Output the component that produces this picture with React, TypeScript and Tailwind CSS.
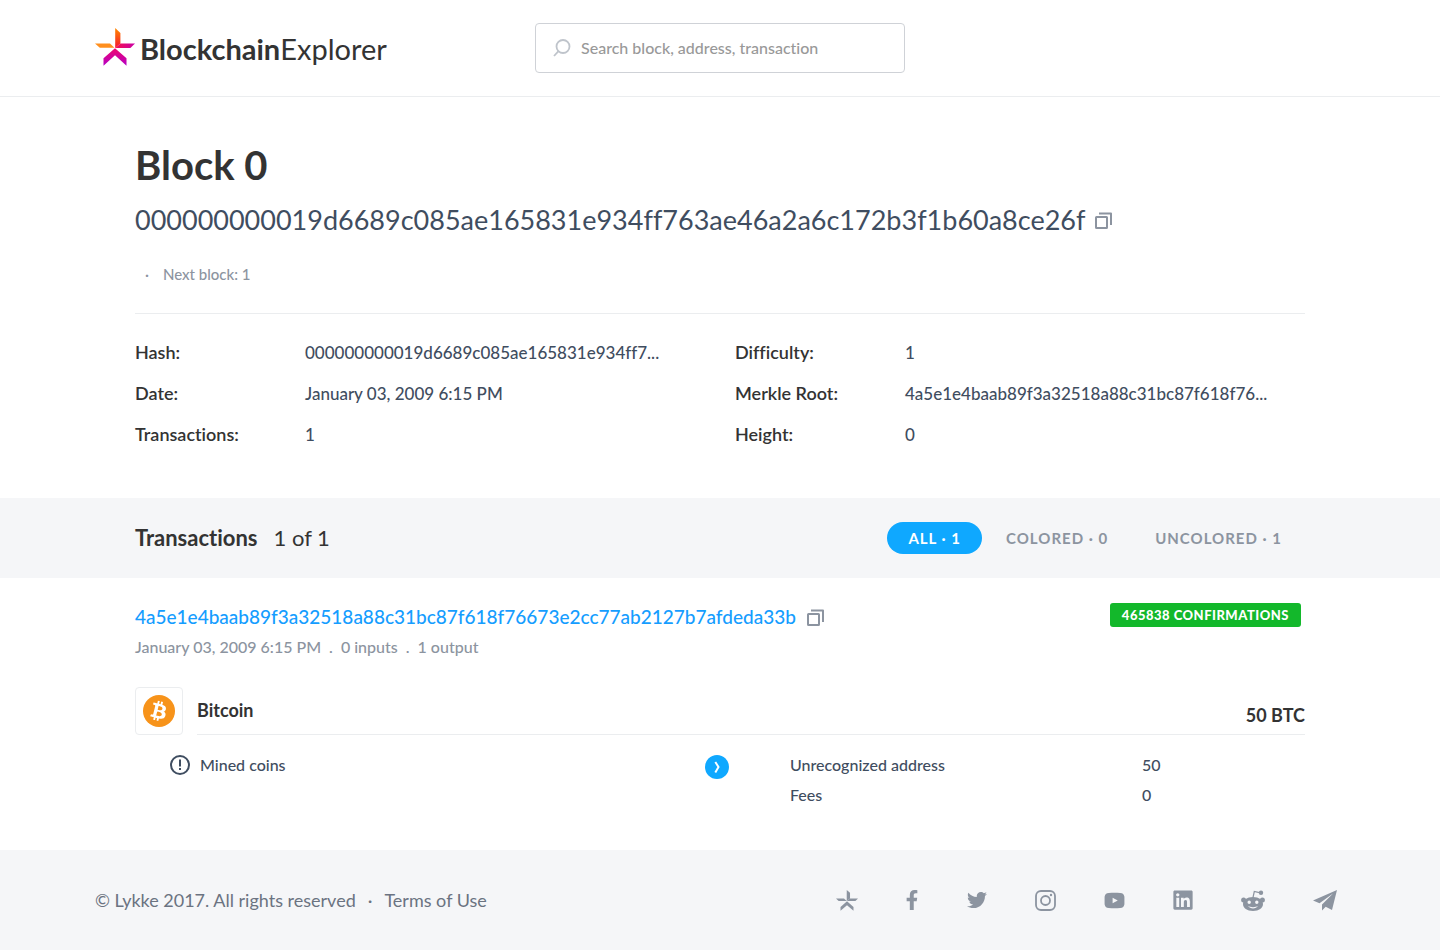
import { FaFacebookF, FaTwitter, FaLinkedin, FaBtc } from "react-icons/fa";

const GRAY = "text-[#8c94a0]";

function CopyIcon() {
  return (
    <svg viewBox="0 0 17 17" className="size-[17px]" fill="none" stroke="#8c94a0" strokeWidth="2" strokeLinejoin="round">
      <rect x="1" y="5" width="11" height="11" rx="0.5" />
      <path d="M4 1.500h12V13" />
    </svg>
  );
}

function StarShape() {
  return (
    <>
      <path d="M19.500 0l6 5v10.200l-6 4.800z" />
      <path d="M20 20l5-4.800H40L35.200 20z" />
      <path d="M0 15.200h14.500l5 4.800H4.800z" />
      <path d="M20 20.300l11.800 10.500v7L20 27.500 8.200 37.800v-7z" />
    </>
  );
}

function Logo() {
  return (
    <svg viewBox="0 0 40 38" className="h-[38px] w-10" aria-hidden="true">
      <defs>
        <linearGradient id="up" x1="0" y1="0" x2="0" y2="1">
          <stop offset="0" stopColor="#ff8a00" />
          <stop offset="1" stopColor="#f5142e" />
        </linearGradient>
        <linearGradient id="right" x1="0" y1="0" x2="1" y2="0">
          <stop offset="0" stopColor="#f8104a" />
          <stop offset="1" stopColor="#c800a8" />
        </linearGradient>
        <linearGradient id="legs" x1="0" y1="0" x2="0" y2="1">
          <stop offset="0" stopColor="#f0056c" />
          <stop offset="1" stopColor="#b400c8" />
        </linearGradient>
      </defs>
      <path fill="#ff8f1e" d="M0 15.500h15l4.500 4.300H4.800z" />
      <path fill="url(#up)" d="M20.200 0l5.200 5v10.500L20.200 20z" />
      <path fill="url(#right)" d="M20.200 20l5.200-4.600H40L35.400 20z" />
      <path fill="url(#legs)" d="M20 20.300l11.500 10v7.500L20 27.300 8.500 37.800v-7.500z" />
    </svg>
  );
}

const left = [
  ["Hash:", "000000000019d6689c085ae165831e934ff7..."],
  ["Date:", "January 03, 2009 6:15 PM"],
  ["Transactions:", "1"],
];
const right = [
  ["Difficulty:", "1"],
  ["Merkle Root:", "4a5e1e4baab89f3a32518a88c31bc87f618f76..."],
  ["Height:", "0"],
];

function Details({ rows }: { rows: string[][] }) {
  return (
    <dl className="flex flex-1 flex-col gap-[17px] text-[17px] leading-6">
      {rows.map(([k, v]) => (
        <div key={k} className="flex h-6 items-baseline">
          <dt className="w-[170px] shrink-0 text-lg leading-6 font-semibold text-[#333]">{k}</dt>
          <dd className="font-medium whitespace-nowrap text-[#3f4d60]">{v}</dd>
        </div>
      ))}
    </dl>
  );
}

function Socials() {
  return (
    <nav className={`mr-2 flex items-center ${GRAY}`}>
      <a href="#lykke" aria-label="Lykke" className="flex w-[22px] justify-center">
        <svg viewBox="0 0 40 38" className="h-[21px] w-[22px]" fill="currentColor"><StarShape /></svg>
      </a>
      <a href="#facebook" aria-label="Facebook" className="ml-11 flex w-5 justify-center"><FaFacebookF className="size-5" /></a>
      <a href="#twitter" aria-label="Twitter" className="ml-[45px] flex"><FaTwitter className="size-5" /></a>
      <a href="#instagram" aria-label="Instagram" className="ml-12 flex">
        <svg viewBox="0 0 21 21" className="size-[21px]" fill="none" stroke="currentColor" strokeWidth="1.800">
          <rect x="1" y="1" width="19" height="19" rx="5" />
          <circle cx="10.500" cy="10.500" r="4.500" />
          <circle cx="16" cy="5" r="1.200" fill="currentColor" stroke="none" />
        </svg>
      </a>
      <a href="#youtube" aria-label="YouTube" className="ml-12 flex">
        <svg viewBox="0 0 22 18" className="h-[17px] w-[21px]" fill="currentColor" fillRule="evenodd">
          <path d="M5 1C9 .7 13 .7 17 1c3 .2 4 1.500 4.500 4v8c-.5 2.500-1.500 3.800-4.500 4-4 .3-8 .3-12 0-3-.2-4-1.500-4.500-4V5C1 2.500 2 1.200 5 1zm4 5v6l5.500-3z" />
        </svg>
      </a>
      <a href="#linkedin" aria-label="LinkedIn" className="ml-[47px] flex"><FaLinkedin className="size-[22px]" /></a>
      <a href="#reddit" aria-label="Reddit" className="ml-[47px] flex">
        <svg viewBox="0 0 24 21" className="h-[21px] w-6" fill="currentColor" fillRule="evenodd">
          <path d="M12 7c6 0 10 3 10 7s-4 7-10 7-10-3-10-7 4-7 10-7zM8.200 10.500a1.700 1.700 0 100 3.400 1.700 1.700 0 000-3.400zm7.600 0a1.700 1.700 0 100 3.400 1.700 1.700 0 000-3.400zM7 16c2 3.200 8 3.200 10 0-2.500 1.500-7.500 1.500-10 0z" />
          <circle cx="2.600" cy="10" r="2.500" /><circle cx="21.400" cy="10" r="2.500" /><circle cx="20" cy="2.700" r="2.200" />
          <path d="M12 7.500L13.300 1.500l5 1.200" fill="none" stroke="currentColor" strokeWidth="1.200" />
        </svg>
      </a>
      <a href="#telegram" aria-label="Telegram" className="ml-12 flex">
        <svg viewBox="0 0 24 21" className="h-[21px] w-6" fill="currentColor">
          <path d="M24 0L0 10.500l6.500 2.700L20 3.500 9 14.500v6l3.700-3.800L19 20z" />
        </svg>
      </a>
    </nav>
  );
}

export default function App() {
  return (
    <div className="min-h-screen bg-white font-[Lato,sans-serif] text-[#3f4d60] [font-variant-ligatures:none]">
      <header className="border-b border-[#ebedef]">
        <div className="mx-auto flex h-24 max-w-[1250px] items-center">
          <a href="#home" className="flex w-[440px] items-center gap-[5px] pb-0.5 text-[#333]">
            <Logo />
            <span className="pt-1 text-[29px] leading-8"><b className="font-bold">Blockchain</b>Explorer</span>
          </a>
          <label className="flex h-[50px] w-[370px] items-center gap-[10px] rounded border border-[#cfd2d7] px-[17px]">
            <svg viewBox="0 0 18 18" className="size-[18px] shrink-0" fill="none" stroke="#bfc4cb" strokeWidth="1.800">
              <circle cx="10" cy="7.500" r="6.500" /><path d="M5.500 12.200L1 17" />
            </svg>
            <input aria-label="Search" placeholder="Search block, address, transaction" className="min-w-0 flex-1 text-base font-medium outline-none placeholder:text-[#999]" />
          </label>
        </div>
      </header>

      <main>
        <section className="mx-auto max-w-[1170px] pt-11 pb-[52px]">
          <h1 className="text-[40px] leading-[48px] font-bold text-[#333]">Block 0</h1>
          <div className="mt-[13px] flex items-center gap-[10px]">
            <h2 className="text-[27px] leading-9 font-normal">000000000019d6689c085ae165831e934ff763ae46a2a6c172b3f1b60a8ce26f</h2>
            <button aria-label="Copy hash"><CopyIcon /></button>
          </div>
          <div className={`mt-6 flex gap-[14px] pl-[10px] text-[15px] leading-6 font-medium ${GRAY}`}>
            <span>·</span><a href="#next">Next block: 1</a>
          </div>
          <div className="mt-[27px] flex gap-[30px] border-t border-[#ebedef] pt-[26px]">
            <Details rows={left} />
            <Details rows={right} />
          </div>
        </section>

        <section className="bg-[#f5f6f8]">
          <div className="mx-auto flex h-20 max-w-[1170px] items-center justify-between">
            <h2 className="flex gap-4 text-[22px] leading-7 text-[#333]"><b className="font-bold">Transactions</b><span>1 of 1</span></h2>
            <div className="flex text-[15px] font-bold tracking-[1px]">
              <button className="h-8 rounded-full bg-[#0fa8ff] px-[21px] text-white">ALL · 1</button>
              <button className={`h-8 px-6 ${GRAY}`}>COLORED · 0</button>
              <button className={`h-8 px-[23px] ${GRAY}`}>UNCOLORED · 1</button>
            </div>
          </div>
        </section>

        <section className="mx-auto max-w-[1170px] pt-[25px] pb-10">
          <div className="flex items-start justify-between">
            <div className="flex items-center gap-[11px]">
              <a href="#tx" className="text-[19px] leading-7 font-medium text-[#159dff]">4a5e1e4baab89f3a32518a88c31bc87f618f76673e2cc77ab2127b7afdeda33b</a>
              <button aria-label="Copy transaction"><CopyIcon /></button>
            </div>
            <span className="mr-1 rounded-[3px] bg-[#13b82b] px-3 text-[13px] leading-6 font-black tracking-[0.5px] text-white">465838 CONFIRMATIONS</span>
          </div>
          <p className={`mt-1 flex gap-2 text-base leading-6 font-medium ${GRAY}`}>
            <span>January 03, 2009 6:15 PM</span><span>.</span><span>0 inputs</span><span>.</span><span>1 output</span>
          </p>
          <div className="mt-7 flex gap-[14px]">
            <div className="flex size-12 items-center justify-center rounded border border-[#ebedef]">
              <span className="flex size-8 items-center justify-center rounded-full bg-[#f7931a]">
                <FaBtc className="size-5 rotate-[14deg] text-white" />
              </span>
            </div>
            <div className="flex flex-1 justify-between border-b border-[#ebedef] text-lg leading-6 font-bold text-[#333]">
              <span className="pt-[11px]">Bitcoin</span><span className="pt-4">50 BTC</span>
            </div>
          </div>
          <div className="mt-[15px] flex pl-[35px] text-base leading-[30px] font-medium">
            <div className="flex h-[30px] w-[535px] items-center gap-[10px]">
              <svg viewBox="0 0 20 20" className="size-5" fill="none" stroke="#3f4d60" strokeWidth="2">
                <circle cx="10" cy="10" r="9" /><path d="M10 4.500v7M10 13v2" />
              </svg>
              <span>Mined coins</span>
            </div>
            <svg viewBox="0 0 24 24" className="mt-[5px] mr-[61px] size-6" fill="none">
              <circle cx="12" cy="12" r="12" fill="#0fa8ff" />
              <path d="M10.300 7l3.200 5-3.200 5.500" stroke="#fff" strokeWidth="2" />
            </svg>
            <dl className="grid grid-cols-[352px_auto]">
              <dt>Unrecognized address</dt><dd>50</dd>
              <dt>Fees</dt><dd>0</dd>
            </dl>
          </div>
        </section>
      </main>

      <footer className="bg-[#f5f6f8]">
        <div className="mx-auto flex h-[100px] max-w-[1250px] items-center justify-between">
          <p className="flex gap-3 text-lg leading-6 text-[#6b7381]">
            <span>© Lykke 2017. All rights reserved</span><span>·</span><a href="#terms">Terms of Use</a>
          </p>
          <Socials />
        </div>
      </footer>
    </div>
  );
}
